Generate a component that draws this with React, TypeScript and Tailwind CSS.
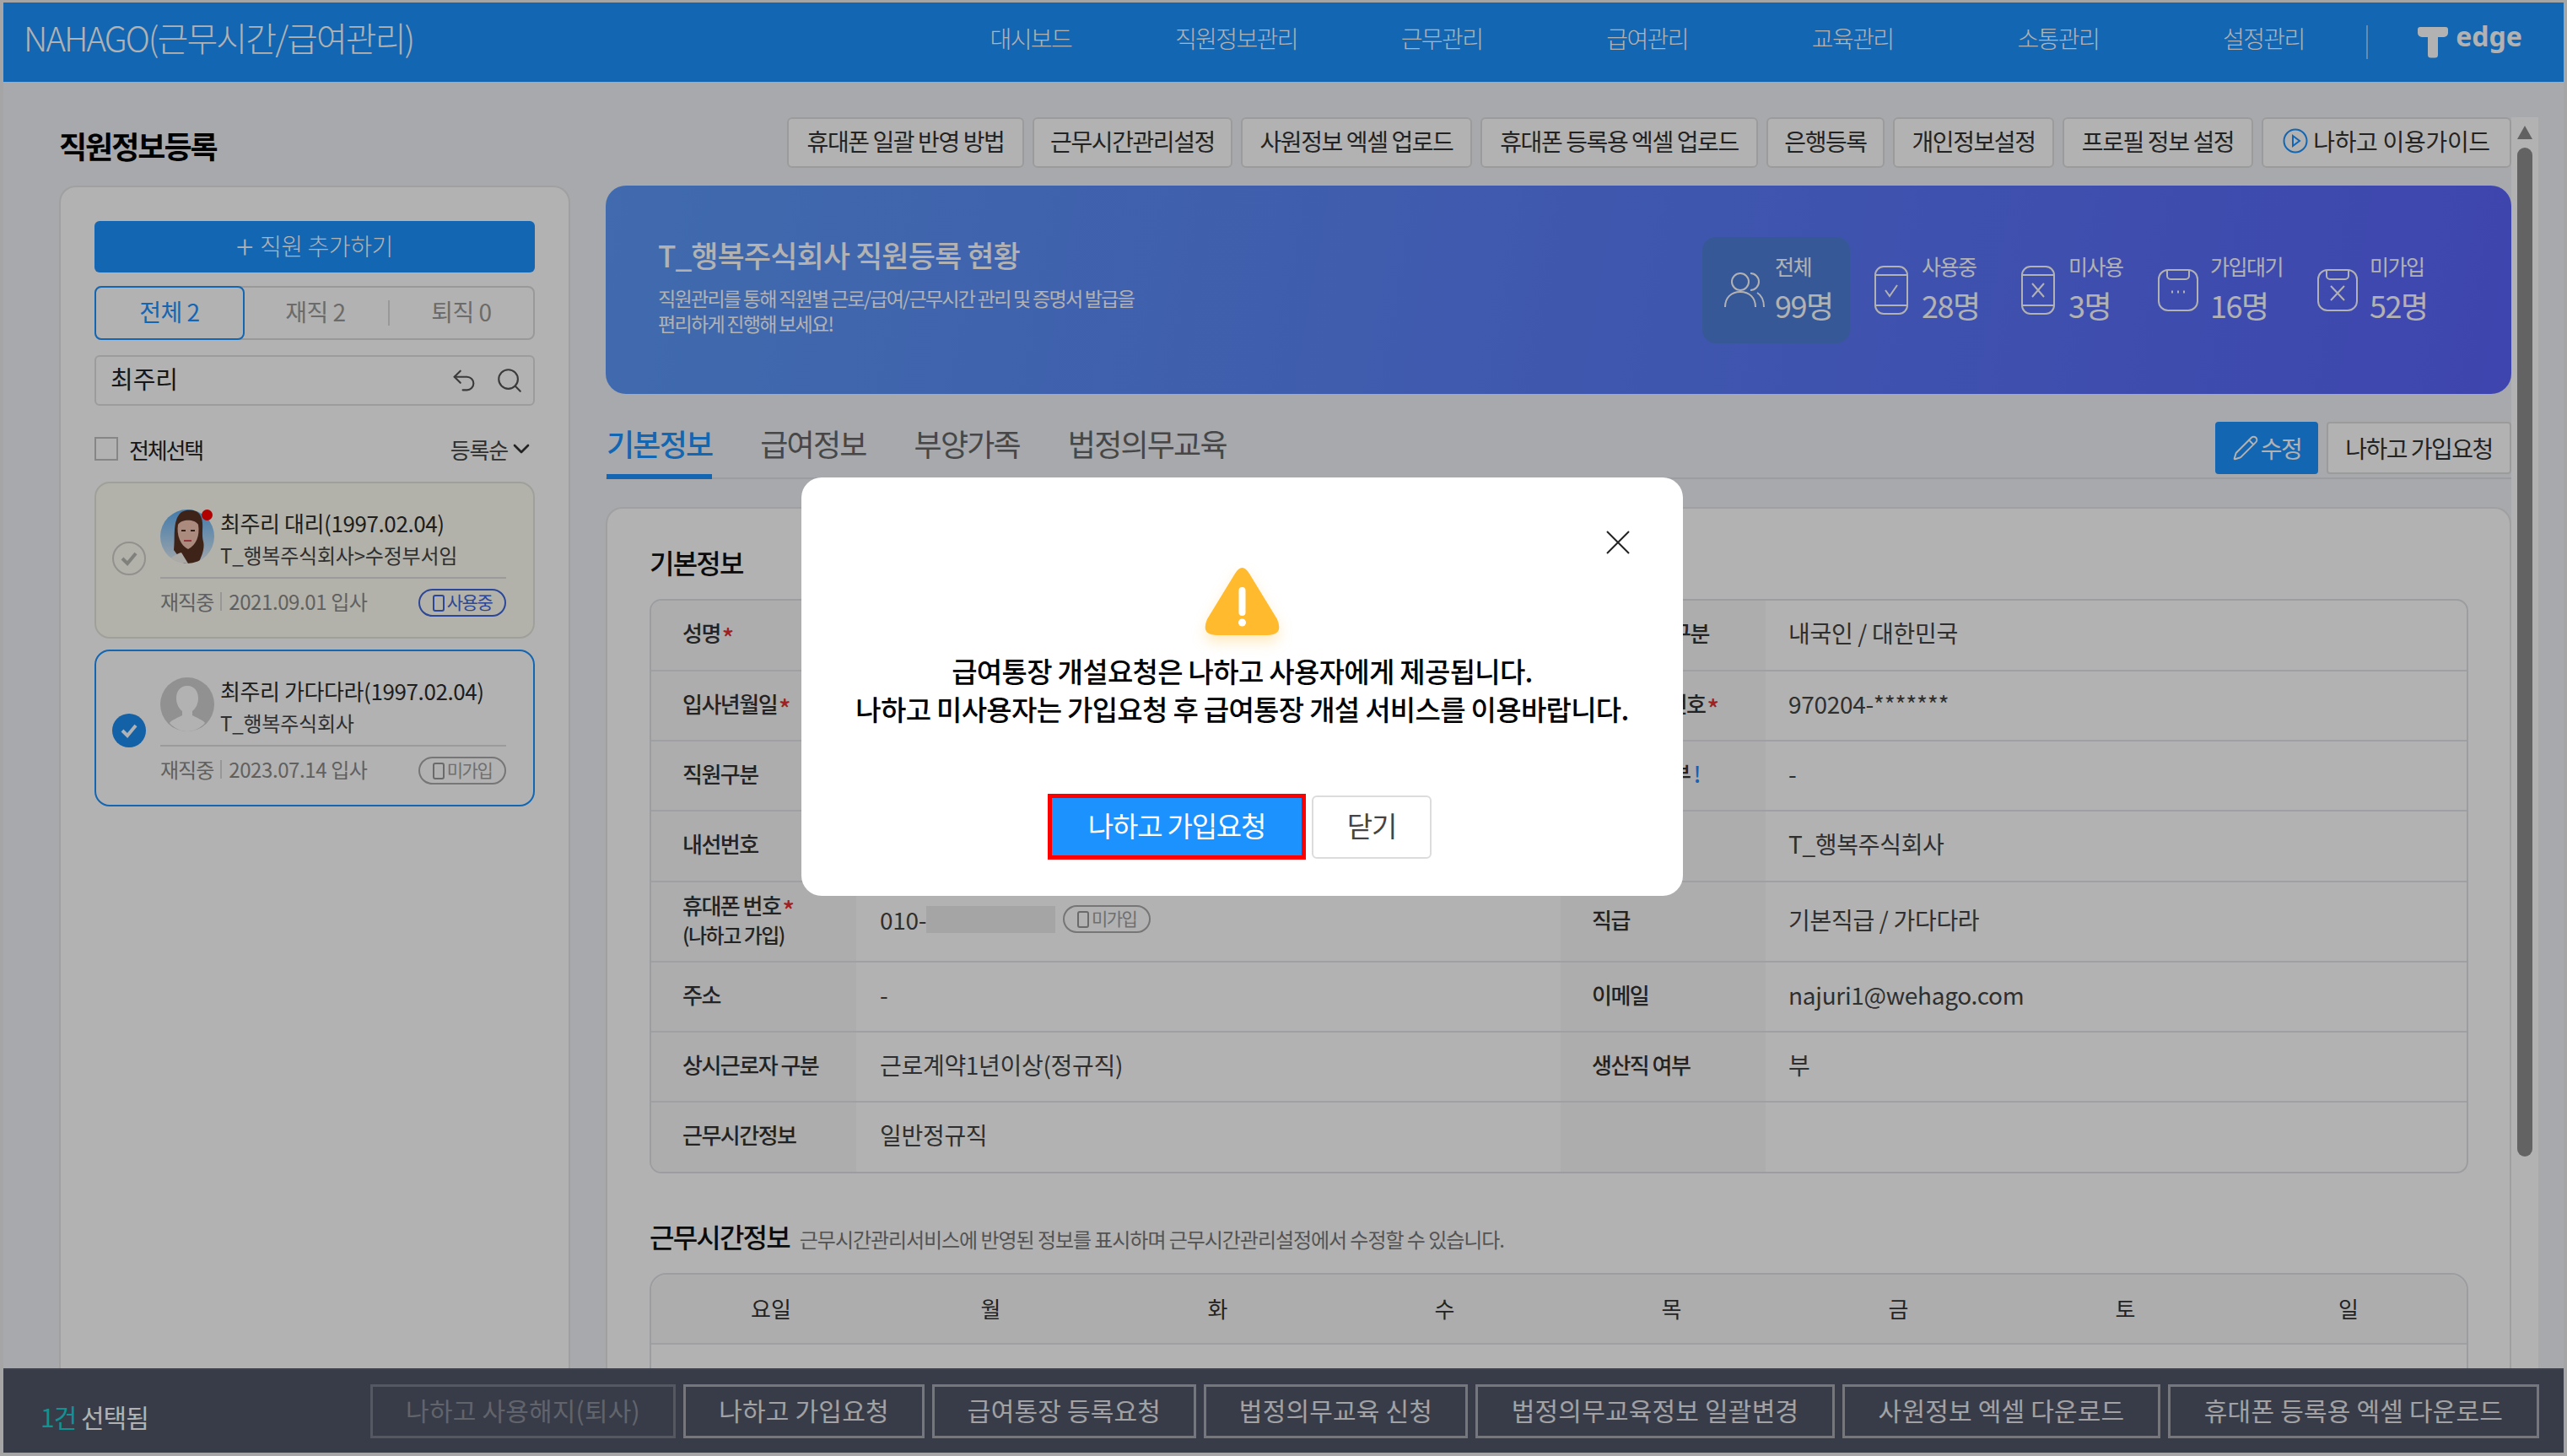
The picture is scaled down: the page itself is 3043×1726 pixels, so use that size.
import { ChevronDown, Pencil, Search, Undo2 } from "lucide-react";

const nav = ["대시보드", "직원정보관리", "근무관리", "급여관리", "교육관리", "소통관리", "설정관리"];

const tools = [
  { label: "휴대폰 일괄 반영 방법", w: "w-[281px]" },
  { label: "근무시간관리설정", w: "w-[237px]" },
  { label: "사원정보 엑셀 업로드", w: "w-[274px]" },
  { label: "휴대폰 등록용 엑셀 업로드", w: "w-[329px]" },
  { label: "은행등록", w: "w-[140px]" },
  { label: "개인정보설정", w: "w-[191px]" },
  { label: "프로필 정보 설정", w: "w-[226px]" },
];

const bottomButtons = [
  { label: "나하고 가입요청", w: "w-[286px]" },
  { label: "급여통장 등록요청", w: "w-[313px]" },
  { label: "법정의무교육 신청", w: "w-[313px]" },
  { label: "법정의무교육정보 일괄변경", w: "w-[426px]" },
  { label: "사원정보 엑셀 다운로드", w: "w-[377px]" },
  { label: "휴대폰 등록용 엑셀 다운로드", w: "w-[440px]" },
];

const rows = [
  { h: "h-[84px]", a: "성명", aReq: true, b: "내외국인 구분", v: "내국인 / 대한민국" },
  { h: "h-[83px]", a: "입사년월일", aReq: true, b: "주민등록번호", bReq: true, v: "970204-*******" },
  { h: "h-[83px]", a: "직원구분", b: "장애인 여부", bInfo: true, v: "-" },
  { h: "h-[84px]", a: "내선번호", b: "회사", v: "T_행복주식회사" },
  { h: "h-[95px]", a: "휴대폰 번호", aReq: true, aSub: "(나하고 가입)", phone: true, b: "직급", v: "기본직급 / 가다다라" },
  { h: "h-[83px]", a: "주소", left: "-", b: "이메일", v: "najuri1@wehago.com" },
  { h: "h-[83px]", a: "상시근로자 구분", left: "근로계약1년이상(정규직)", b: "생산직 여부", v: "부" },
  { h: "h-[82px]", a: "근무시간정보", left: "일반정규직", b: "", v: "" },
];

const PhoneIcon = ({ mark }: { mark: "check" | "x" }) => (
  <svg width="40" height="58" viewBox="0 0 40 58" fill="none" stroke="#fff" strokeWidth="2">
    <rect x="1" y="1" width="38" height="56" rx="10" />
    <path d="M1 11h38M1 47h38" />
    {mark === "check" ? <path d="M13 29l5 7 9-13" /> : <path d="M13 21l14 16M27 21L13 37" />}
  </svg>
);

const BoxIcon = ({ mark }: { mark: "dots" | "x" }) => (
  <svg width="48" height="50" viewBox="0 0 48 50" fill="none" stroke="#fff" strokeWidth="2">
    <rect x="1" y="1" width="46" height="48" rx="11" />
    <path d="M11 1v7a4 4 0 0 0 4 4h18a4 4 0 0 0 4-4V1" />
    {mark === "dots" ? <path d="M16 27h2M23 27h2M30 27h2" strokeWidth="3" /> : <path d="M16 20l16 17M32 20L16 37" />}
  </svg>
);

const MiniPhone = ({ color }: { color: string }) => (
  <svg width="14" height="20" viewBox="0 0 14 20" fill="none" stroke={color} strokeWidth="2">
    <rect x="1" y="1" width="12" height="18" rx="2" />
  </svg>
);

const Badge = ({ used }: { used?: boolean }) => (
  <span
    className={`flex h-[33px] w-[104px] items-center justify-center gap-[3px] rounded-full border-2 text-[21px] tracking-[-1.5px] ${
      used ? "border-[#3f66d8] text-[#3f66d8]" : "border-[#a9a9a9] text-[#a0a0a0]"
    }`}
  >
    <MiniPhone color={used ? "#3f66d8" : "#999"} />
    <span className="pb-[2px]">{used ? "사용중" : "미가입"}</span>
  </span>
);

const PhotoAvatar = () => (
  <svg width="64" height="64" viewBox="0 0 64 64">
    <defs>
      <linearGradient id="sky" x1="0" y1="0" x2="0" y2="1">
        <stop offset="0" stopColor="#5fb0f5" />
        <stop offset="1" stopColor="#e6eff5" />
      </linearGradient>
      <clipPath id="round">
        <circle cx="32" cy="32" r="32" />
      </clipPath>
    </defs>
    <g clipPath="url(#round)">
      <rect width="64" height="64" fill="url(#sky)" />
      <path d="M16 48c2-14-2-34 8-44 6-5 18-5 23 2 6 10 1 20 4 32 2 8-2 18-6 26H28z" fill="#5a3324" />
      <path d="M21 18c4-7 20-7 24 0 2 12-2 24-12 29-9-4-14-17-12-29z" fill="#f4c8b4" />
      <path d="M9 64c2-7 9-11 16-13l8 13z" fill="#f6f4f0" />
      <path d="M28 37h9" stroke="#d04c58" strokeWidth="2" />
      <path d="M25 25h5M36 25h5" stroke="#4a3028" strokeWidth="2" />
    </g>
  </svg>
);

const BlankAvatar = () => (
  <svg width="64" height="64" viewBox="0 0 64 64">
    <circle cx="32" cy="32" r="32" fill="#d0d0d0" />
    <path d="M32 10c-9 0-13 7-13 15 0 6 3 12 7 15v5c-5 3-12 5-15 9 5 6 13 10 21 10s16-4 21-10c-3-4-10-6-15-9v-5c4-3 7-9 7-15 0-8-4-15-13-15z" fill="#fff" />
  </svg>
);

const Card = ({
  selected,
  name,
  org,
  date,
  used,
}: {
  selected?: boolean;
  name: string;
  org: string;
  date: string;
  used?: boolean;
}) => (
  <div
    className={`relative flex h-[186px] w-full items-center rounded-[18px] border-2 pl-[19px] pr-[32px] ${
      selected ? "border-[#1c92ff] bg-white" : "border-[#e6e6df] bg-[#fffff4]"
    }`}
  >
    {selected ? (
      <span className="mt-[6px] flex h-[40px] w-[40px] shrink-0 items-center justify-center rounded-full bg-[#1c8cf0]">
        <svg width="22" height="18" viewBox="0 0 22 18" fill="none" stroke="#fff" strokeWidth="4">
          <path d="M3 9l6 6L19 3" />
        </svg>
      </span>
    ) : (
      <span className="mt-[-4px] flex h-[40px] w-[40px] shrink-0 items-center justify-center rounded-full border-2 border-[#d0d0cb]">
        <svg width="22" height="18" viewBox="0 0 22 18" fill="none" stroke="#b8b8b4" strokeWidth="4">
          <path d="M3 9l6 6L19 3" />
        </svg>
      </span>
    )}
    <div className="ml-[17px] flex-1 pt-[2px]">
      <div className="flex items-center gap-[7px] border-b-2 border-[#dedede] pb-[12px]">
        <div className="relative h-[64px] w-[64px] shrink-0">
          {used ? <PhotoAvatar /> : <BlankAvatar />}
          {used && <span className="absolute right-[2px] top-0 h-[13px] w-[13px] rounded-full bg-[#f00]" />}
        </div>
        <div className="flex flex-col gap-[9px] pt-[5px]">
          <span className="text-[26px] leading-[30px] tracking-[-0.4px] text-[#2c2c2c]">{name}</span>
          <span className="text-[24px] leading-[28px] tracking-[-0.2px] text-[#444]">{org}</span>
        </div>
      </div>
      <div className="flex h-[44px] items-center justify-between pt-[11px]">
        <span className="flex items-center pb-[1px] text-[24px] tracking-[-1px] text-[#8a8a8a]">
          재직중
          <span className="mx-[8px] h-[22px] w-[2px] bg-[#d8d8d8]" />
          <span className="tracking-[-0.4px]">{date}</span>
        </span>
        <span className="mt-[2px]">
          <Badge used={used} />
        </span>
      </div>
    </div>
  </div>
);

const Label = ({ text, req, sub, info }: { text: string; req?: boolean; sub?: string; info?: boolean }) => (
  <div className="flex flex-col justify-center bg-[#f8f8f8] pb-[6px] pl-[37px] text-[26px] font-medium tracking-[-1.5px] text-[#333]">
    <span className="leading-[36px]">
      {text}
      {req && <span className="ml-[2px] align-[-7px] text-[30px] leading-[0] text-[#e53030]">*</span>}
      {info && <span className="ml-[4px] text-[#1c92ff]">!</span>}
    </span>
    {sub && <span className="text-[24px] leading-[34px]">{sub}</span>}
  </div>
);

const Stat = ({ w, iconW, icon, label, value }: { w: string; iconW: string; icon: React.ReactNode; label: string; value: string }) => (
  <div className={`flex items-center ${w}`}>
    <div className={`flex justify-start ${iconW}`}>{icon}</div>
    <div className="mb-[8px] flex flex-col gap-[10px] text-white">
      <span className="text-[25px] leading-[32px] tracking-[-1.5px]">{label}</span>
      <span className="text-[36px] leading-[40px] tracking-[-1.5px]">{value}</span>
    </div>
  </div>
);

export default function App() {
  return (
    <div
      className="relative h-[1726px] w-[3043px] overflow-hidden bg-[#ececec] pb-[4px] pl-[4px] pr-[4px] pt-[3px]"
      style={{ fontFamily: '"Noto Sans CJK KR", "Noto Sans", sans-serif' }}
    >
      <div className="flex h-full flex-col bg-[#f0f2f7]">
        {/* header */}
        <header className="flex h-[94px] shrink-0 items-center bg-[#1c92ff] text-white">
          <h1 className="mb-[12px] ml-[24px] w-[1072px] text-[40px] font-light tracking-[-1.9px]">NAHAGO(근무시간/급여관리)</h1>
          <nav className="mb-[10px] flex">
            {nav.map((n) => (
              <span key={n} className="w-[243.6px] text-center text-[28px] font-light tracking-[-1.6px]">
                {n}
              </span>
            ))}
          </nav>
          <span className="h-[40px] w-[2px] bg-white/50" />
          <div className="ml-[58px] flex items-center gap-[8px]">
            <svg width="38" height="38" viewBox="0 0 38 38" fill="#fff">
              <path d="M4 1h30a3 3 0 0 1 3 3v4a5 5 0 0 1-5 5h-7v21a3.500 3.500 0 0 1-3.500 3.500h-5A3.500 3.500 0 0 1 13 34V13H6a5 5 0 0 1-5-5V4a3 3 0 0 1 3-3z" />
            </svg>
            <span className="mt-[-14px] text-[32px] font-bold leading-none" style={{ fontFamily: '"Noto Sans", sans-serif' }}>
              edge
            </span>
          </div>
        </header>

        {/* body */}
        <div className="flex min-h-0 flex-1">
          <div className="flex min-w-0 flex-1 flex-col pl-[66px] pt-[42px]">
            <div className="flex h-[60px] shrink-0 items-center justify-between">
              <h2 className="mt-[6px] text-[36px] font-bold tracking-[-2px] text-black">직원정보등록</h2>
              <div className="flex gap-[10px]">
                {tools.map((t) => (
                  <button key={t.label} className={`h-[60px] rounded-[6px] border-2 border-[#dfdfdf] bg-white pb-[4px] text-[28px] tracking-[-1.4px] text-[#333] ${t.w}`}>
                    {t.label}
                  </button>
                ))}
                <button className="flex h-[60px] w-[296px] items-center justify-center gap-[6px] rounded-[6px] border-2 border-[#dfdfdf] bg-white pb-[4px] text-[28px] tracking-[-0.3px] text-[#333]">
                  <svg width="30" height="30" viewBox="0 0 30 30" fill="none" stroke="#1c92ff" strokeWidth="2">
                    <circle cx="15" cy="15" r="13.500" />
                    <path d="M12 9l8 6-8 6z" />
                  </svg>
                  나하고 이용가이드
                </button>
              </div>
            </div>

            <div className="mt-[21px] flex min-h-0 flex-1 gap-[42px]">
              {/* left panel */}
              <aside className="w-[606px] shrink-0 overflow-hidden rounded-t-[20px] border-2 border-b-0 border-[#e5e5e5] bg-white px-[40px] pt-[40px]">
                <button className="flex h-[61px] w-full items-center justify-center gap-[8px] rounded-[6px] bg-[#1c92ff] pb-[4px] text-[28px] font-light tracking-[-0.4px] text-white">
                  <span className="text-[38px] leading-none">+</span> 직원 추가하기
                </button>
                <div className="mt-[16px] flex h-[64px] rounded-[8px] border-2 border-[#dcdcdc] text-[28px] tracking-[-0.5px] text-[#9a9a9a]">
                  <span className="m-[-2px] flex w-[178px] items-center justify-center rounded-[8px] border-2 border-[#1c92ff] pb-[5px] text-[#1c92ff]">전체 2</span>
                  <span className="flex w-[172px] items-center justify-center pb-[5px]">재직 2</span>
                  <span className="h-[30px] w-[2px] self-center bg-[#dcdcdc]" />
                  <span className="flex flex-1 items-center justify-center pb-[5px]">퇴직 0</span>
                </div>
                <div className="mt-[18px] flex h-[60px] items-center rounded-[6px] border-2 border-[#e0e0e0] pl-[17px] pr-[11px] text-[29px] text-[#222]">
                  <span className="flex-1 pb-[5px]">최주리</span>
                  <Undo2 size={34} strokeWidth={1.5} color="#555" />
                  <Search size={34} strokeWidth={1.5} color="#555" className="ml-[20px]" />
                </div>
                <div className="mt-[22px] flex h-[58px] items-center justify-between">
                  <label className="flex items-center gap-[13px] text-[26px] tracking-[-2.2px] text-[#222]">
                    <span className="h-[28px] w-[28px] border-2 border-[#c0c0c0]" />
                    전체선택
                  </label>
                  <span className="flex items-center text-[26px] tracking-[-1.2px] text-[#444]">
                    등록순
                    <ChevronDown size={32} strokeWidth={2} color="#333" />
                  </span>
                </div>
                <div className="mt-[10px] flex flex-col gap-[13px]">
                  <Card name="최주리 대리(1997.02.04)" org="T_행복주식회사>수정부서임" date="2021.09.01 입사" used />
                  <Card selected name="최주리 가다다라(1997.02.04)" org="T_행복주식회사" date="2023.07.14 입사" />
                </div>
              </aside>

              {/* main column */}
              <main className="flex w-[2259px] shrink-0 flex-col">
                <section className="flex h-[247px] shrink-0 items-center rounded-[24px] bg-[linear-gradient(100deg,#5c9af8,#5a64fa)] pl-[62px] text-white">
                  <div className="mb-[10px] w-[1238px]">
                    <h3 className="text-[35px] font-medium leading-[44px] tracking-[-0.9px]">T_행복주식회사 직원등록 현황</h3>
                    <p className="mt-[14px] text-[23px] leading-[30px] tracking-[-1.7px]">
                      직원관리를 통해 직원별 근로/급여/근무시간 관리 및 증명서 발급을
                      <br />
                      편리하게 진행해 보세요!
                    </p>
                  </div>
                  <div className="flex h-[126px] w-[175px] items-center rounded-[16px] bg-[#4f7fd8] pl-[25px]">
                    <svg width="50" height="44" viewBox="0 0 50 44" fill="none" stroke="#fff" strokeWidth="2" className="shrink-0">
                      <circle cx="20" cy="12" r="10" />
                      <path d="M2 42c0-11 7-18 18-18s18 7 18 18" />
                      <path d="M32 2a10 10 0 0 1 0 20M40 25c5 3 8 9 8 17" />
                    </svg>
                    <div className="mb-[8px] ml-[11px] flex flex-col gap-[10px]">
                      <span className="text-[25px] leading-[32px] tracking-[-1.5px]">전체</span>
                      <span className="text-[36px] leading-[40px] tracking-[-1.5px]">99명</span>
                    </div>
                  </div>
                  <div className="ml-[29px] flex">
                    <Stat w="w-[174px]" iconW="w-[56px]" icon={<PhoneIcon mark="check" />} label="사용중" value="28명" />
                    <Stat w="w-[162px]" iconW="w-[56px]" icon={<PhoneIcon mark="x" />} label="미사용" value="3명" />
                    <Stat w="w-[189px]" iconW="w-[62px]" icon={<BoxIcon mark="dots" />} label="가입대기" value="16명" />
                    <Stat w="w-[140px]" iconW="w-[62px]" icon={<BoxIcon mark="x" />} label="미가입" value="52명" />
                  </div>
                </section>

                <div className="mt-[33px] flex h-[68px] shrink-0 items-start justify-between border-b-2 border-[#dfe1e6]">
                  <div className="flex gap-[57px] pt-[1px] text-[36px] leading-[48px] tracking-[-1.8px] text-[#666]">
                    <span className="ml-[1px] h-[67px] border-b-[6px] border-[#1c92ff] font-medium text-[#1c92ff]">기본정보</span>
                    <span>급여정보</span>
                    <span>부양가족</span>
                    <span>법정의무교육</span>
                  </div>
                  <div className="flex gap-[10px]">
                    <button className="flex h-[62px] w-[122px] items-center justify-center gap-[2px] rounded-[4px] bg-[#1c92ff] text-[28px] tracking-[-1.5px] text-white">
                      <Pencil size={32} strokeWidth={1.5} />
                      수정
                    </button>
                    <button className="h-[62px] w-[219px] rounded-[4px] border-2 border-[#dfdfdf] bg-white text-[28px] tracking-[-1.5px] text-[#333]">
                      나하고 가입요청
                    </button>
                  </div>
                </div>

                <section className="mt-[33px] min-h-0 flex-1 overflow-hidden rounded-t-[20px] border-2 border-b-0 border-[#e5e5e5] bg-white px-[50px] pt-[40px]">
                  <h3 className="h-[67px] text-[32px] font-medium leading-[46px] tracking-[-1.8px] text-[#111]">기본정보</h3>
                  <div className="w-[2156px] overflow-hidden rounded-[14px] border-2 border-[#dfe1e6]">
                    {rows.map((r, i) => (
                      <div
                        key={r.a}
                        className={`grid grid-cols-[243px_835px_243px_1fr] text-[28px] tracking-[-0.3px] text-[#444] ${r.h} ${
                          i < rows.length - 1 ? "border-b-2 border-[#e4e6ea]" : ""
                        }`}
                      >
                        <Label text={r.a} req={r.aReq} sub={r.aSub} />
                        <div className="flex items-center pb-[6px] pl-[28px]">
                          {r.phone ? (
                            <>
                              <span>010-</span>
                              <span className="h-[32px] w-[153px] bg-[#ececec]" />
                              <span className="ml-[9px]">
                                <Badge />
                              </span>
                            </>
                          ) : (
                            r.left
                          )}
                        </div>
                        <Label text={r.b} req={r.bReq} info={r.bInfo} />
                        <div className="flex items-center pb-[6px] pl-[27px]">{r.v}</div>
                      </div>
                    ))}
                  </div>

                  <div className="mt-[51px] flex items-baseline gap-[12px]">
                    <h3 className="text-[32px] font-medium leading-[46px] tracking-[-1.8px] text-[#111]">근무시간정보</h3>
                    <span className="text-[24px] tracking-[-1.05px] text-[#777]">
                      근무시간관리서비스에 반영된 정보를 표시하며 근무시간관리설정에서 수정할 수 있습니다.
                    </span>
                  </div>
                  <div className="mt-[21px] h-[200px] w-[2156px] rounded-t-[20px] border-2 border-[#dfe1e6]">
                    <div className="grid h-[83px] grid-cols-[268px_repeat(6,269px)_1fr] items-center rounded-t-[20px] border-b-2 border-[#e4e6ea] bg-[#f8f8f8] pb-[3px] text-center text-[26px] text-[#333]">
                      <span className="pl-[16px]">요일</span>
                      <span>월</span>
                      <span>화</span>
                      <span>수</span>
                      <span>목</span>
                      <span>금</span>
                      <span>토</span>
                      <span className="pr-[10px]">일</span>
                    </div>
                  </div>
                </section>
              </main>
            </div>
          </div>

          {/* page scrollbar */}
          <div className="mt-[42px] flex w-[32px] shrink-0 flex-col items-center bg-white">
            <svg width="18" height="16" viewBox="0 0 18 16" className="mt-[10px]" fill="#8c8c8c">
              <path d="M9 0l9 16H0z" />
            </svg>
            <div className="mt-[10px] h-[1196px] w-[18px] rounded-full bg-[#8e8e8e]" />
          </div>
          <div className="w-[30px] shrink-0" />
        </div>

        {/* bottom action bar */}
        <footer className="flex h-[100px] shrink-0 items-center justify-between border-t-2 border-[#5b5f6b] bg-[#515768] pl-[44px] pr-[29px]">
          <span className="mt-[12px] text-[30px] tracking-[-1px] text-white">
            <span className="text-[#1ad1d1]">1건</span> 선택됨
          </span>
          <div className="flex gap-[9px]">
            <button className="h-[64px] w-[362px] border-[3px] border-[#7b7f8b] pb-[4px] text-[30px] tracking-[0.2px] text-[#8d909b]">나하고 사용해지(퇴사)</button>
            {bottomButtons.map((b) => (
              <button key={b.label} className={`h-[64px] border-[3px] border-[#a8abb3] pb-[4px] text-[30px] tracking-[0.2px] text-[#e8e8ec] ${b.w}`}>
                {b.label}
              </button>
            ))}
          </div>
        </footer>
      </div>

      {/* dimmed layer and modal */}
      <div className="absolute inset-0 bg-black/30 pl-[950px] pt-[566px]">
        <div className="relative flex h-[496px] w-[1045px] flex-col items-center rounded-[24px] bg-white">
          <svg width="28" height="28" viewBox="0 0 28 28" fill="none" stroke="#222" strokeWidth="2" className="absolute left-[954px] top-[63px]">
            <path d="M1 1l26 26M27 1L1 27" />
          </svg>
          <svg width="89" height="81" viewBox="0 0 89 81" className="mt-[106px] drop-shadow-[0_8px_8px_rgba(255,186,46,0.3)]">
            <path d="M36 8Q44.500-6 53 8L86 62Q94 81 74 81H15Q-5 81 3 62Z" fill="#ffba2e" />
            <rect x="40.500" y="24" width="8" height="34" rx="4" fill="#fff" />
            <circle cx="44.500" cy="66" r="4.500" fill="#fff" />
          </svg>
          <p className="mt-[20px] text-center text-[33px] font-medium leading-[45px] tracking-[-0.7px] text-black">
            급여통장 개설요청은 나하고 사용자에게 제공됩니다.
            <br />
            나하고 미사용자는 가입요청 후 급여통장 개설 서비스를 이용바랍니다.
          </p>
          <div className="ml-[-6px] mt-[78px] flex items-center gap-[7px]">
            <button className="h-[78px] w-[306px] border-[5px] border-[#ff0000] bg-[#1c92ff] pb-[3px] text-[33px] tracking-[-1.2px] text-white">
              나하고 가입요청
            </button>
            <button className="h-[75px] w-[142px] rounded-[6px] border-2 border-[#dcdcdc] bg-white pb-[3px] text-[33px] tracking-[-1.2px] text-[#444]">
              닫기
            </button>
          </div>
        </div>
      </div>
    </div>
  );
}
